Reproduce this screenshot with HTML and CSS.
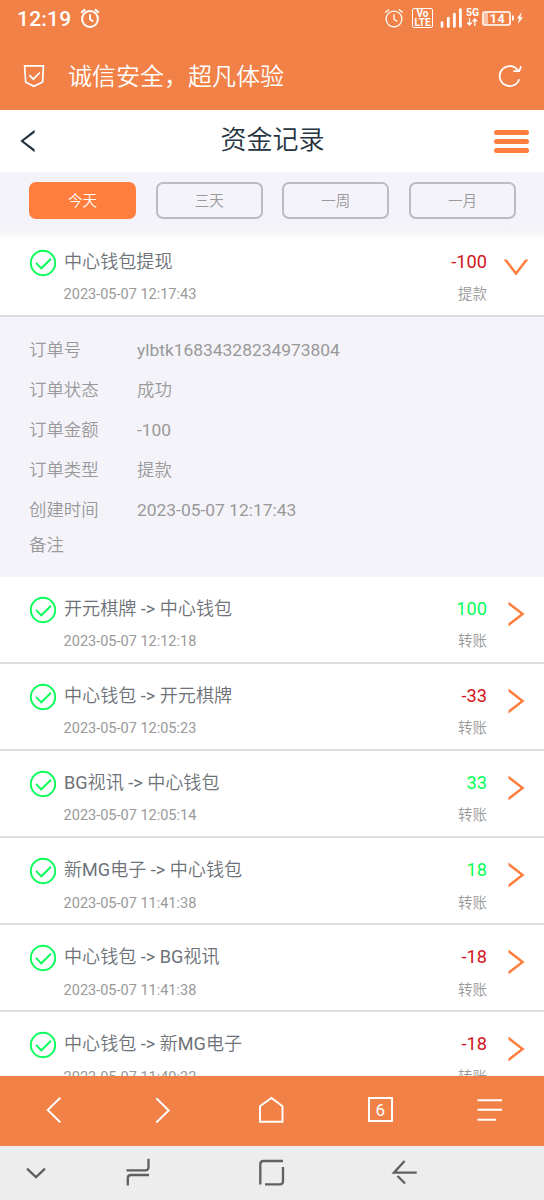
FILE: index.html
```html
<!DOCTYPE html>
<html lang="zh-CN">
<head>
<meta charset="utf-8">
<title>资金记录</title>
<link rel="stylesheet" href="styles.css">
</head>
<body>
<svg class="sprite" width="0" height="0">
  <symbol id="check" viewBox="0 0 28 28"><circle cx="14" cy="14" r="12.2"/><path d="M7 13.8l5.3 5.5L22 9.7"/></symbol>
  <symbol id="arrow" viewBox="0 0 26 26"><path d="M5.500.600L21.600 13 5.500 25.400v-3.200L17.600 13 5.500 3.800z"/></symbol>
  <symbol id="alarm" viewBox="0 0 20 20"><circle cx="10" cy="11" r="7.9"/><path d="M10 6.3v5l3.3 2.2M1.2 4.6l4-3.2M18.8 4.6l-4-3.2"/></symbol>
</svg>
<div class="phone">
  <header class="status">
    <span class="clock">12:19</span>
    <svg class="alarm bold" width="20" height="20"><use href="#alarm"/></svg>
    <div class="status-right">
      <svg class="alarm" width="20" height="20"><use href="#alarm"/></svg>
      <span class="volte"><b>Vo</b><b>LTE</b></span>
      <svg class="signal" width="22" height="20" viewBox="0 0 22 20"><path d="M2 14.5v4M8.3 10v8.5M14.4 6v12.5M20.4 1.5v17"/></svg>
      <span class="net"><b>5G</b><svg width="12" height="8" viewBox="0 0 12 8"><path d="M3.5 0v7M1.3 4.5l2.2 2.5 2.2-2.5M8.8 8V1M6.6 3.5L8.8 1 11 3.5"/></svg></span>
      <span class="battery">14</span>
      <svg class="bolt" width="11" height="16" viewBox="0 0 11 16"><path d="M0 5.5h1.8v5H0zM9.8 2L5 8.6h2.3L5.9 14 11 7.2H8.4z"/></svg>
    </div>
  </header>
  <div class="address">
    <svg class="shield" width="24" height="26" viewBox="0 0 24 26"><path d="M2.6 2.9h18.8L20.6 19 12 23.2 3.7 19.2z"/><path d="M7.3 12.2l4 4L18 9.5"/></svg>
    <span class="slogan">诚信安全，超凡体验</span>
    <svg class="reload" width="26" height="26" viewBox="0 0 26 26"><path d="M22.2 16.2A10 10 0 1 1 21.3 8"/><path d="M16.3 8.2h5.9l1.9-5.1"/></svg>
  </div>
  <nav class="titlebar">
    <svg class="back" width="17" height="24" viewBox="0 0 17 24"><path d="M15.600.8v3L4.600 12l11 8.200v3L1.300 12z"/></svg>
    <h1>资金记录</h1>
    <div class="menu"><i></i><i></i><i></i></div>
  </nav>
  <div class="filters">
    <span class="filter on">今天</span><span class="filter">三天</span><span class="filter">一周</span><span class="filter">一月</span>
  </div>
  <main class="records">
    <section class="row first">
      <svg class="check"><use href="#check"/></svg>
      <div class="info"><p class="name">中心钱包提现</p><p class="sub">2023-05-07 12:17:43</p></div>
      <div class="money"><p class="amount out">-100</p><p class="sub">提款</p></div>
      <svg class="arrow down"><use href="#arrow"/></svg>
    </section>
    <dl class="detail">
      <dt>订单号</dt><dd>ylbtk16834328234973804</dd>
      <dt>订单状态</dt><dd>成功</dd>
      <dt>订单金额</dt><dd>-100</dd>
      <dt>订单类型</dt><dd>提款</dd>
      <dt>创建时间</dt><dd>2023-05-07 12:17:43</dd>
      <dt class="remark">备注</dt>
    </dl>
    <section class="row">
      <svg class="check"><use href="#check"/></svg>
      <div class="info"><p class="name">开元棋牌 -&gt; 中心钱包</p><p class="sub">2023-05-07 12:12:18</p></div>
      <div class="money"><p class="amount in">100</p><p class="sub">转账</p></div>
      <svg class="arrow"><use href="#arrow"/></svg>
    </section>
    <section class="row">
      <svg class="check"><use href="#check"/></svg>
      <div class="info"><p class="name">中心钱包 -&gt; 开元棋牌</p><p class="sub">2023-05-07 12:05:23</p></div>
      <div class="money"><p class="amount out">-33</p><p class="sub">转账</p></div>
      <svg class="arrow"><use href="#arrow"/></svg>
    </section>
    <section class="row">
      <svg class="check"><use href="#check"/></svg>
      <div class="info"><p class="name">BG视讯 -&gt; 中心钱包</p><p class="sub">2023-05-07 12:05:14</p></div>
      <div class="money"><p class="amount in">33</p><p class="sub">转账</p></div>
      <svg class="arrow"><use href="#arrow"/></svg>
    </section>
    <section class="row low">
      <svg class="check"><use href="#check"/></svg>
      <div class="info"><p class="name">新MG电子 -&gt; 中心钱包</p><p class="sub">2023-05-07 11:41:38</p></div>
      <div class="money"><p class="amount in">18</p><p class="sub">转账</p></div>
      <svg class="arrow"><use href="#arrow"/></svg>
    </section>
    <section class="row low">
      <svg class="check"><use href="#check"/></svg>
      <div class="info"><p class="name">中心钱包 -&gt; BG视讯</p><p class="sub">2023-05-07 11:41:38</p></div>
      <div class="money"><p class="amount out">-18</p><p class="sub">转账</p></div>
      <svg class="arrow"><use href="#arrow"/></svg>
    </section>
    <section class="row low">
      <svg class="check"><use href="#check"/></svg>
      <div class="info"><p class="name">中心钱包 -&gt; 新MG电子</p><p class="sub">2023-05-07 11:40:32</p></div>
      <div class="money"><p class="amount out">-18</p><p class="sub">转账</p></div>
      <svg class="arrow"><use href="#arrow"/></svg>
    </section>
  </main>
  <nav class="toolbar">
    <svg width="28" height="28" viewBox="0 0 28 28"><path d="M20.3 1.8L7.7 14l12.6 12.2"/></svg>
    <svg width="28" height="28" viewBox="0 0 28 28"><path d="M7.3 2.3L19.7 14.500 7.300 26.500"/></svg>
    <svg width="28" height="28" viewBox="0 0 28 28"><path d="M2 25.700V10.300L13.500 2l11 8.300v15.400z"/></svg>
    <span class="tabs"><span>6</span></span>
    <svg width="28" height="28" viewBox="0 0 28 28"><path d="M1.500 4.300h24.500M1.500 13.700h24.500M1.500 23.700H20"/></svg>
  </nav>
  <footer class="system">
    <svg width="24" height="30" viewBox="0 0 24 30"><path d="M3 10.700l9 8.500 9-8.500"/></svg>
    <svg class="recent" width="28" height="30" viewBox="0 0 28 30"><path d="M2.500 12.300h19q3 0 3-3V.800M25 17H7q-3.200 0-3.200 3.200v7.300"/></svg>
    <svg class="home" width="28" height="30" viewBox="0 0 28 30"><path d="M2.300 26.500V6q0-3 3-3H25M25 9v14.300q0 3-3 3H7"/></svg>
    <svg class="return" width="28" height="30" viewBox="0 0 28 30"><path d="M13.600 3L3 14.600h22.700M6.500 18l7.600 7.500"/></svg>
  </footer>
</div>
</body>
</html>
```

FILE: styles.css
```css
* { box-sizing: border-box; }
body { margin: 0; font-family: Roboto, "Noto Sans CJK SC DemiLight", "Noto Sans CJK SC", sans-serif; color: #999; }
p, h1, dl, dd { margin: 0; font-weight: 400; }
svg { display: block; flex: none; fill: none; }
.sprite { position: absolute; }
.phone { width: 544px; height: 1200px; display: flex; flex-direction: column; overflow: hidden; background: #fff; }

.status { height: 36px; flex: none; display: flex; align-items: center; padding: 0 21px 0 17px; background: #f28147; color: #fff; }
.clock { width: 63px; font-size: 21px; font-weight: 500; line-height: 36px; letter-spacing: .2px; padding-top: 2px; }
.alarm { stroke: #fff; stroke-width: 1.3; }
.alarm.bold { stroke-width: 2; }
.status-right { margin-left: auto; display: flex; align-items: center; }
.volte { width: 21px; height: 20px; margin-left: 8px; border: 1.5px solid #fff; border-radius: 2px; display: flex; flex-direction: column; align-items: center; font-size: 10px; line-height: 10px; }
.volte b { height: 8px; }
.volte b:last-child { font-size: 10px; line-height: 11px; }
.signal { margin-left: 7px; stroke: #fff; stroke-width: 2.700; stroke-linecap: round; }
.net { width: 13px; height: 20px; margin: 0 3px 0 4px; font-size: 10.500px; line-height: 10px; }
.net b { display: block; }
.net svg { stroke: #fff; stroke-width: 1.300; }
.battery { width: 29px; height: 15px; border: 2px solid #ffe5d7; border-radius: 3px; background: linear-gradient(90deg, #f9c0a3 4px, transparent 4px); font-size: 12.500px; font-weight: 700; line-height: 12px; text-align: center; letter-spacing: .5px; padding-left: 2px; }
.bolt { fill: #fff; margin-left: 1px; }

.address { height: 74px; flex: none; display: flex; align-items: center; padding: 6px 21px 0 22px; background: #f28147; color: #fff; }
.shield, .reload { stroke: #fff; stroke-width: 1.700; }
.slogan { margin-left: 22px; font-size: 24px; font-weight: 350; line-height: 36px; padding-top: 2px; }
.reload { margin-left: auto; }

.titlebar { height: 62px; flex: none; display: grid; grid-template-columns: 50px 1fr 50px; align-items: center; padding: 0 15px 0 19px; color: #253440; }
.back { fill: #253440; }
h1 { font-size: 26px; font-weight: 350; line-height: 38px; text-align: center; padding-right: 3px; margin-top: -2px; }
.menu { width: 35px; justify-self: end; display: grid; gap: 4px; margin-top: 1px; }
.menu i { height: 5px; border-radius: 3px; background: #ff7e3d; }

.filters { height: 58px; flex: none; display: grid; grid-template-columns: repeat(4, 107px); grid-template-rows: 37px; justify-content: space-between; padding: 10px 28px 11px 29px; background: #f4f3f9; }
.filter { border: 2px solid #bdbac8; border-radius: 7px; font-size: 14.500px; font-weight: 350; line-height: 35px; text-align: center; }
.filter.on { border-color: #ff7e3d; background: #ff7e3d; color: #fff; }

.records { flex: 1; min-height: 0; overflow: hidden; }
.row { height: 87px; display: grid; grid-template-columns: 35px 1fr 120px 37px; padding: 16px 20px 0 29px; border-bottom: 2px solid #ddd; }
.row.first { background: linear-gradient(#f4f4f5, #fff 12px); }
.check { width: 28px; height: 28px; margin-top: 3px; stroke: #07ff57; stroke-width: 1.900; }
.name { font-size: 18.080px; line-height: 32px; color: #6d7178; white-space: nowrap; }
.sub { font-size: 14.500px; line-height: 34px; }
.info .sub { margin-left: -.4px; }
.low .sub { line-height: 35px; }
.money { text-align: right; }
.amount { font-size: 18.200px; line-height: 32px; }
.out { color: #d2141c; }
.in { color: #07ff57; }
.arrow { width: 26px; height: 26px; margin: 8px 0 0 16px; fill: #ff7e3d; }
.down { margin-left: 15.500px; transform: rotate(90deg); }

.detail { height: 260px; background: #f4f3f9; padding: 13px 29px 0; display: grid; grid-template-columns: 108px 1fr; grid-auto-rows: 40px; font-size: 17.400px; line-height: 40px; }
dt { font-weight: 350; }
.remark { line-height: 30px; }

.toolbar { height: 70px; flex: none; display: grid; grid-template-columns: repeat(5, 1fr); align-items: center; justify-items: center; background: #f28147; }
.toolbar svg { stroke: #fff; stroke-width: 1.900; margin-top: -3px; }
.tabs { width: 25px; height: 25px; margin: -3px 1px 0 0; border: 2px solid #fff; color: #fff; font-size: 17px; line-height: 23px; text-align: center; }

.system { height: 54px; flex: none; display: flex; align-items: flex-start; padding: 12px 0 0 24px; background: #ededed; }
.system svg { stroke: #606060; stroke-width: 2.300; }
.recent { margin-left: 76px; }
.home { margin-left: 106px; }
.return { margin-left: 105px; }
```
